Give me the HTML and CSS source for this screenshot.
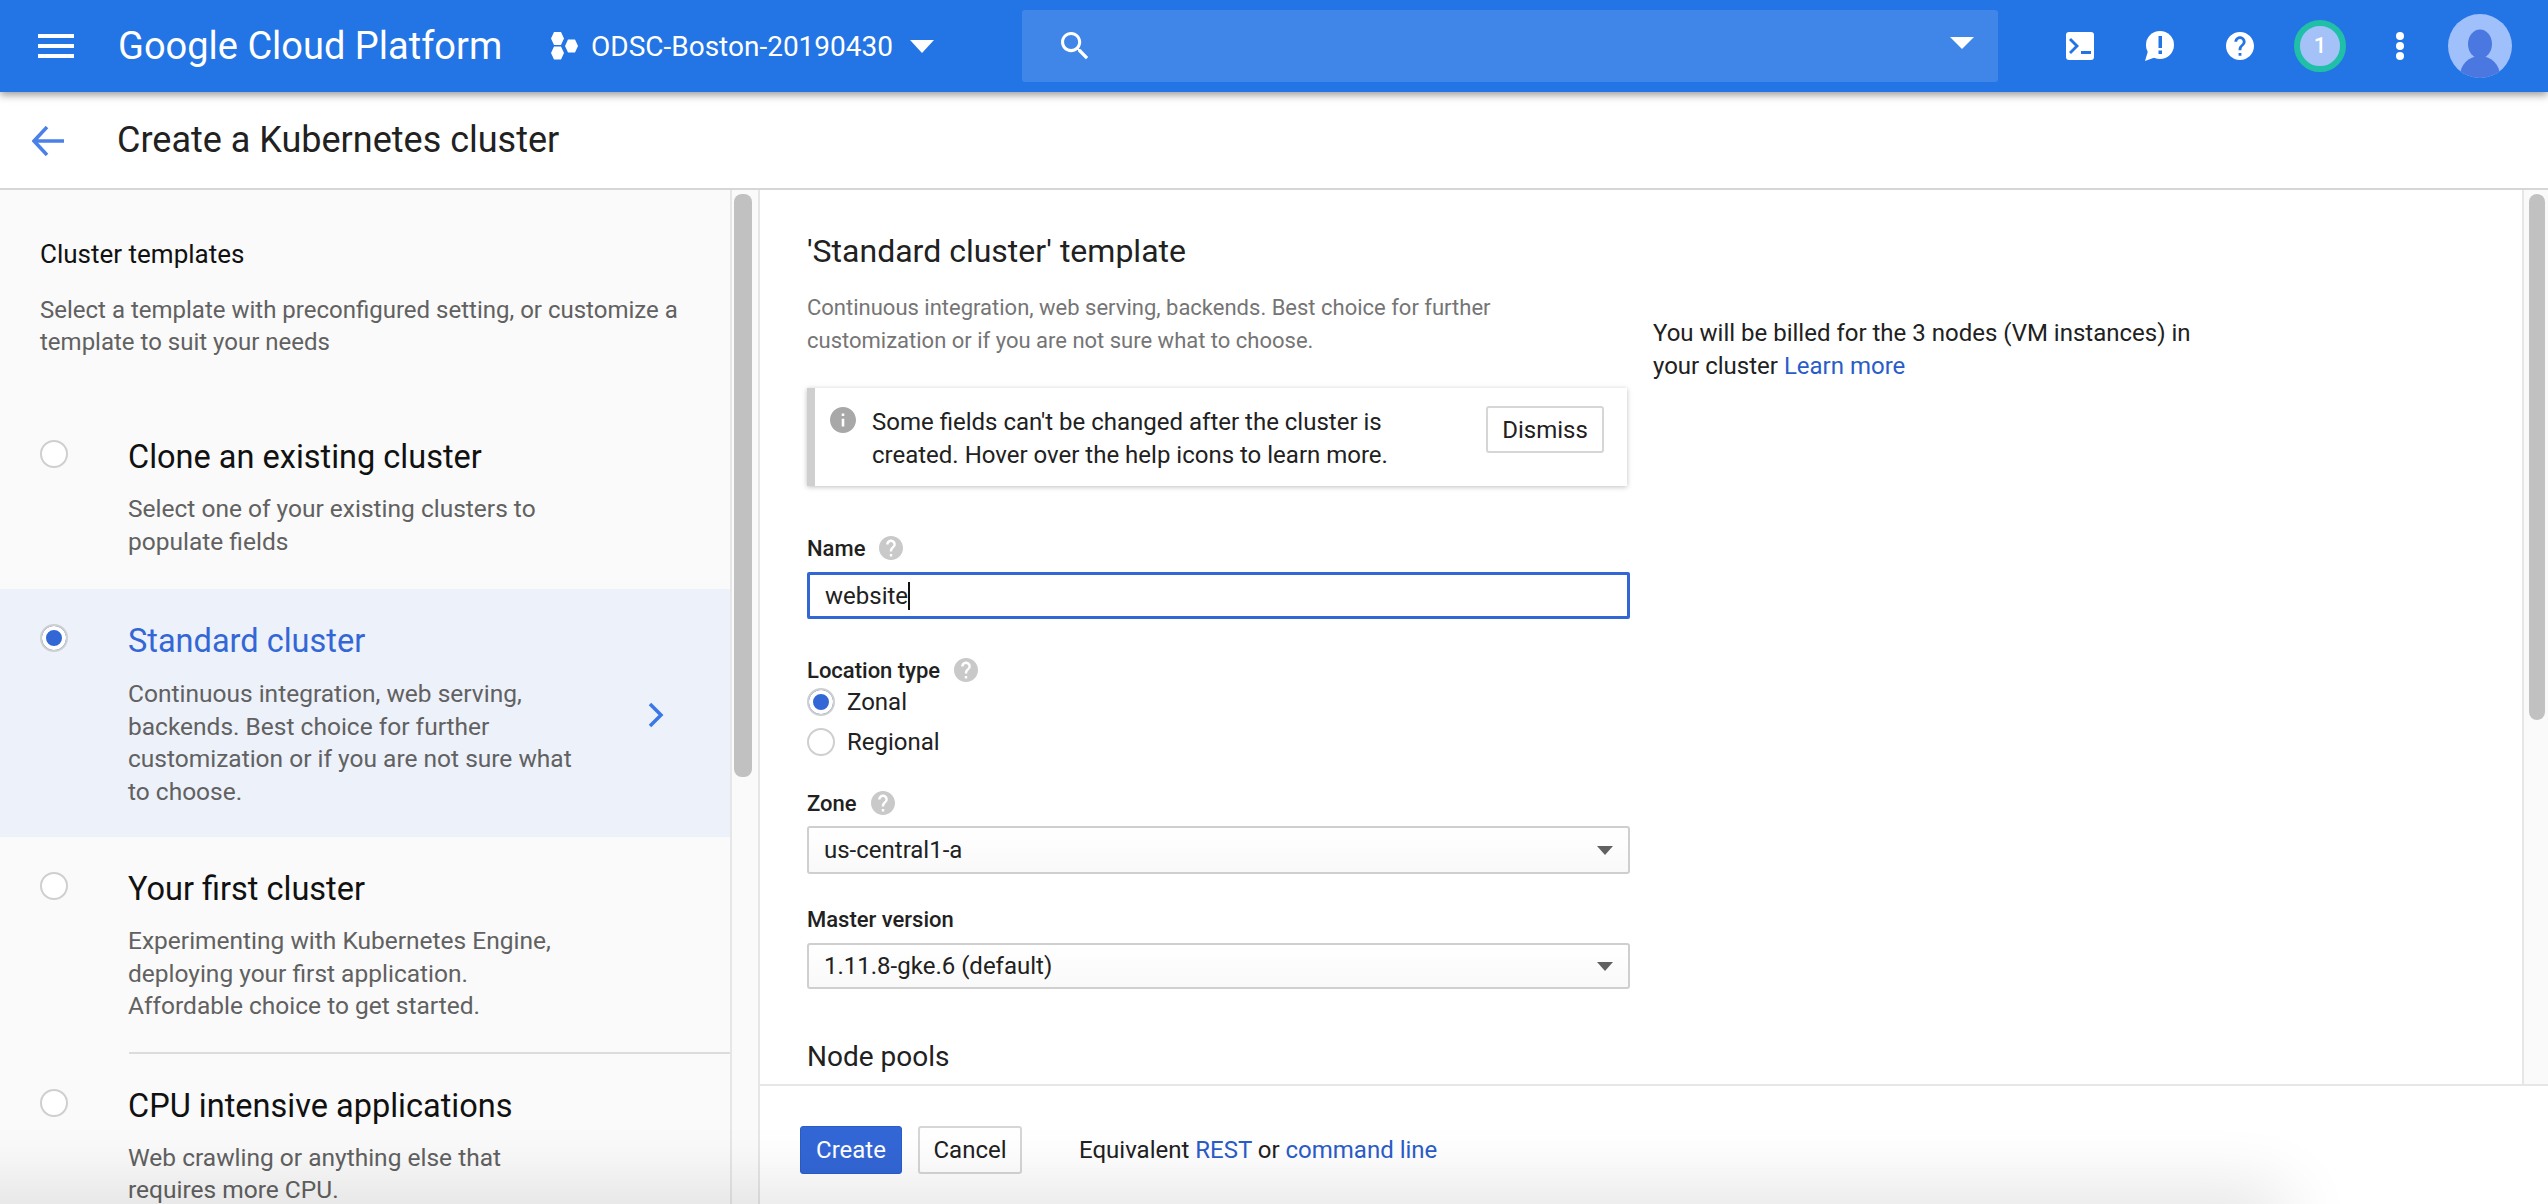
FILE: index.html
```html
<!DOCTYPE html>
<html lang="en">
<head>
    <meta charset="UTF-8">
    <meta name="viewport" content="width=device-width, initial-scale=1.0">
    <title>Create a Kubernetes cluster</title>
    <link rel="stylesheet" href="styles.css">
</head>
<body>
    <svg class="defs" width="0" height="0">
        <symbol id="help" viewBox="2 2 20 20"><path d="M12 2C6.48 2 2 6.48 2 12s4.48 10 10 10 10-4.48 10-10S17.52 2 12 2zm1 17h-2v-2h2v2zm2.07-7.75l-.9.92C13.45 12.9 13 13.5 13 15h-2v-.5c0-1.1.45-2.1 1.17-2.83l1.24-1.26c.37-.36.59-.86.59-1.41 0-1.1-.9-2-2-2s-2 .9-2 2H8c0-2.21 1.79-4 4-4s4 1.79 4 4c0 .88-.36 1.68-.93 2.25z"/></symbol>
    </svg>

    <header class="topbar">
        <svg class="menu-icon" viewBox="0 0 36 24"><path d="M0 0h36v4H0zM0 10h36v4H0zM0 20h36v4H0z"/></svg>
        <div class="logo">Google Cloud Platform</div>
        <svg class="project-icon" viewBox="0 0 27 28"><path d="M3 0h7l3 6.500-3 6.500H3L0 6.500zM3 14.500h7l3 6.500-3 6.500H3L0 21zM17 7.500h7l3 6.500-3 6.500h-7l-3-6.500z"/></svg>
        <div class="project-name">ODSC-Boston-20190430</div>
        <span class="tri tri-project"></span>
        <div class="search">
            <svg class="search-icon" viewBox="3 3 18 18"><path d="M15.5 14h-.79l-.28-.27C15.41 12.59 16 11.11 16 9.5 16 5.91 13.09 3 9.5 3S3 5.91 3 9.5 5.91 16 9.5 16c1.61 0 3.09-.59 4.23-1.57l.27.28v.79l5 4.99L20.49 19l-4.99-5zm-6 0C7.01 14 5 11.99 5 9.5S7.01 5 9.5 5 14 7.01 14 9.5 11.99 14 9.5 14z"/></svg>
            <span class="tri tri-search"></span>
        </div>
        <svg class="top-icon terminal" viewBox="0 0 28 28"><rect width="28" height="28" rx="3" fill="#fff"/><path d="M3 8l2-2 8 8-8 8-2-2 6-6z" fill="#2374e4"/><path d="M15 19h10v3H15z" fill="#2374e4"/></svg>
        <svg class="top-icon feedback" viewBox="0 0 32 30"><circle cx="16" cy="14" r="14" fill="#fff"/><path d="M4 20l-3 10 11-4z" fill="#fff"/><path d="M14.500 5h3.500v12h-3.500zM14.500 19.500h3.500v3.500h-3.500z" fill="#2374e4"/></svg>
        <svg class="top-icon help-top"><use href="#help"/></svg>
        <div class="badge">1</div>
        <svg class="top-icon dots" viewBox="0 0 8 28"><circle cx="4" cy="4" r="4"/><circle cx="4" cy="14" r="4"/><circle cx="4" cy="24" r="4"/></svg>
        <svg class="avatar" viewBox="0 0 64 64"><circle cx="32" cy="32" r="32" fill="#9fc0fa"/><clipPath id="avatar-clip"><circle cx="32" cy="32" r="32"/></clipPath><g clip-path="url(#avatar-clip)" fill="#4a78e0"><ellipse cx="32" cy="30" rx="12" ry="14.500"/><ellipse cx="32" cy="62" rx="20" ry="20"/></g></svg>
    </header>

    <div class="subheader">
        <svg class="back-icon" viewBox="0 0 32 30"><path d="M15 1L2 15l13 14M2 15h30" fill="none" stroke="#4a80e8" stroke-width="3.500"/></svg>
        <h1 class="page-title">Create a Kubernetes cluster</h1>
    </div>

    <div class="layout">
        <aside class="sidebar">
            <div class="sidebar-list">
                <div class="sidebar-head">
                    <h2 class="sidebar-title">Cluster templates</h2>
                    <p class="sidebar-desc">Select a template with preconfigured setting, or customize a<br>template to suit your needs</p>
                </div>

                <div class="option">
                    <span class="radio"></span>
                    <div class="option-text">
                        <div class="option-title">Clone an existing cluster</div>
                        <div class="option-desc">Select one of your existing clusters to<br>populate fields</div>
                    </div>
                </div>

                <div class="option selected">
                    <span class="radio checked"></span>
                    <div class="option-text">
                        <div class="option-title">Standard cluster</div>
                        <div class="option-desc">Continuous integration, web serving,<br>backends. Best choice for further<br>customization or if you are not sure what<br>to choose.</div>
                    </div>
                    <svg class="option-arrow" viewBox="0 0 16 26"><path d="M2 2l11 11L2 24" fill="none" stroke="#3b78e7" stroke-width="3.500"/></svg>
                </div>

                <div class="option">
                    <span class="radio"></span>
                    <div class="option-text">
                        <div class="option-title">Your first cluster</div>
                        <div class="option-desc">Experimenting with Kubernetes Engine,<br>deploying your first application.<br>Affordable choice to get started.</div>
                    </div>
                </div>

                <div class="option-divider"></div>

                <div class="option">
                    <span class="radio"></span>
                    <div class="option-text">
                        <div class="option-title">CPU intensive applications</div>
                        <div class="option-desc">Web crawling or anything else that<br>requires more CPU.</div>
                    </div>
                </div>
            </div>
            <div class="scrollbar scrollbar-side"><div class="thumb thumb-side"></div></div>
        </aside>

        <main class="main">
            <div class="main-body">
                <div class="form">
                    <h2 class="form-title">'Standard cluster' template</h2>
                    <p class="form-desc">Continuous integration, web serving, backends. Best choice for further<br>customization or if you are not sure what to choose.</p>

                    <div class="callout">
                        <svg class="callout-icon" viewBox="2 2 20 20"><path d="M12 2C6.48 2 2 6.48 2 12s4.48 10 10 10 10-4.48 10-10S17.52 2 12 2zm1 15h-2v-6h2v6zm0-8h-2V7h2v2z"/></svg>
                        <p class="callout-text">Some fields can't be changed after the cluster is<br>created. Hover over the help icons to learn more.</p>
                        <button class="btn btn-dismiss">Dismiss</button>
                    </div>

                    <div class="field-label label-name">Name <svg class="help-icon"><use href="#help"/></svg></div>
                    <div class="text-input"><span>website</span><span class="caret"></span></div>

                    <div class="field-label label-location">Location type <svg class="help-icon"><use href="#help"/></svg></div>
                    <div class="radio-group">
                        <div class="radio-row"><span class="radio checked"></span>Zonal</div>
                        <div class="radio-row"><span class="radio"></span>Regional</div>
                    </div>

                    <div class="field-label label-zone">Zone <svg class="help-icon"><use href="#help"/></svg></div>
                    <div class="select select-zone">us-central1-a<span class="tri tri-select"></span></div>

                    <div class="field-label label-master">Master version</div>
                    <div class="select select-master">1.11.8-gke.6 (default)<span class="tri tri-select"></span></div>

                    <h2 class="form-title node-pools">Node pools</h2>
                </div>

                <p class="billing-note">You will be billed for the 3 nodes (VM instances) in<br>your cluster <a href="#">Learn more</a></p>

                <div class="scrollbar scrollbar-main"><div class="thumb thumb-main"></div></div>
            </div>

            <footer class="footer">
                <button class="btn btn-primary">Create</button>
                <button class="btn btn-cancel">Cancel</button>
                <div class="footer-text">Equivalent <a href="#">REST</a> or <a href="#">command line</a></div>
            </footer>
        </main>
    </div>

    <div class="bottom-shade"></div>
</body>
</html>
```

FILE: styles.css
```css
* {
    box-sizing: border-box;
}
html, body {
    height: 100%;
}
body {
    margin: 0;
    display: flex;
    flex-direction: column;
    position: relative;
    overflow: hidden;
    font-family: Roboto, "Liberation Sans", sans-serif;
    font-size: 24px;
    color: #212121;
    background: #fff;
}
h1, h2, p {
    margin: 0;
    font-weight: 400;
}
a {
    color: #2a5cc9;
    text-decoration: none;
}
.defs {
    position: absolute;
}

/* top bar */
.topbar {
    flex: none;
    height: 92px;
    display: flex;
    align-items: center;
    background: #2374e4;
    color: #fff;
    box-shadow: 0 3px 8px rgba(0,0,0,0.4);
    position: relative;
    z-index: 2;
}
.menu-icon {
    width: 36px;
    height: 24px;
    margin-left: 38px;
    fill: #fff;
}
.logo {
    margin-left: 44px;
    font-size: 38px;
    white-space: nowrap;
    width: 433px;
}
.project-icon {
    width: 27px;
    height: 28px;
    fill: #fff;
}
.project-name {
    margin-left: 13px;
    font-size: 28px;
    width: 319px;
    white-space: nowrap;
}
.tri {
    display: block;
    width: 0;
    height: 0;
    border-style: solid;
    border-color: transparent;
    border-bottom-width: 0;
}
.tri-project {
    border-width: 13px 12px 0;
    border-top-color: #fff;
}
.search {
    width: 976px;
    height: 72px;
    margin-left: 88px;
    display: flex;
    align-items: center;
    justify-content: space-between;
    padding: 0 24px 0 39px;
    background: #3f86e8;
    border-radius: 3px;
}
.search-icon {
    width: 28px;
    height: 28px;
    fill: #fff;
}
.tri-search {
    border-width: 12px 12px 0;
    border-top-color: #fff;
    margin-bottom: 6px;
}
.top-icon {
    fill: #fff;
    flex: none;
}
.terminal {
    width: 28px;
    height: 28px;
    margin-left: 68px;
}
.feedback {
    width: 32px;
    height: 30px;
    margin-left: 50px;
}
.help-top {
    width: 28px;
    height: 28px;
    margin-left: 50px;
}
.badge {
    width: 52px;
    height: 52px;
    margin-left: 40px;
    border: 6px solid #1fbfa8;
    border-radius: 50%;
    background: #a4c2f8;
    font-size: 22px;
    font-weight: 500;
    line-height: 40px;
    text-align: center;
}
.dots {
    width: 8px;
    height: 28px;
    margin-left: 50px;
}
.avatar {
    width: 64px;
    height: 64px;
    margin-left: 44px;
}

/* page title row */
.subheader {
    flex: none;
    height: 98px;
    display: flex;
    align-items: center;
    padding-left: 32px;
    border-bottom: 2px solid #d6d6d6;
}
.back-icon {
    width: 32px;
    height: 30px;
    margin-top: 2px;
}
.page-title {
    margin-left: 53px;
    font-size: 36px;
}

.layout {
    flex: 1;
    display: flex;
    min-height: 0;
}

/* left column */
.sidebar {
    flex: none;
    width: 760px;
    display: flex;
    background: #fafafa;
    border-right: 2px solid #e6e6e6;
}
.sidebar-list {
    width: 732px;
    flex: none;
    overflow: hidden;
    border-right: 2px solid #e6e6e6;
}
.sidebar-head {
    padding: 48px 0 49px 40px;
}
.sidebar-title {
    font-size: 26px;
    line-height: 32px;
    color: #111;
}
.sidebar-desc {
    margin-top: 24px;
    line-height: 32px;
    color: #616161;
}
.option {
    display: flex;
    padding: 30px 0 31px 40px;
}
.option.selected {
    padding: 32px 0 29px 40px;
    background: #edf1fa;
}
.option.selected + .option {
    padding-top: 32px;
}
.option-text {
    margin-left: 60px;
}
.option-title {
    font-size: 32.500px;
    line-height: 40px;
    color: #111;
}
.selected .option-title {
    color: #3367d6;
}
.option-desc {
    margin-top: 16px;
    font-size: 24.500px;
    line-height: 32.5px;
    color: #616161;
}
.selected .option-desc {
    margin-top: 17px;
}
.option-arrow {
    width: 16px;
    height: 26px;
    align-self: center;
    margin-left: auto;
    margin-right: 66px;
}
.option-divider {
    height: 2px;
    margin: -2px 0 2px 129px;
    background: #dcdcdc;
}
.radio {
    flex: none;
    width: 28px;
    height: 28px;
    margin-top: 3px;
    border: 2px solid #cfcfcf;
    border-radius: 50%;
    background: #fff;
}
.radio.checked {
    background: #3367d6;
    box-shadow: inset 0 0 0 4px #fff;
}

/* scrollbars */
.scrollbar {
    flex: none;
    background: #fafafa;
}
.scrollbar-side {
    width: 26px;
    padding: 4px 6px 0 2px;
}
.thumb {
    border-radius: 8px;
    background: #c1c1c1;
}
.thumb-side {
    height: 583px;
}
.scrollbar-main {
    width: 26px;
    margin-left: auto;
    padding: 4px 3px 0 5px;
    border-left: 2px solid #e6e6e6;
}
.thumb-main {
    height: 526px;
}

/* form */
.main {
    flex: 1;
    min-width: 0;
    display: flex;
    flex-direction: column;
}
.main-body {
    flex: 1;
    min-height: 0;
    display: flex;
    overflow: hidden;
    padding-left: 47px;
}
.form {
    flex: none;
    width: 823px;
    padding-top: 41px;
}
.form-title {
    font-size: 32px;
    line-height: 40px;
    color: #212121;
}
.form-desc {
    margin-top: 21px;
    line-height: 32.5px;
    font-size: 22px;
    color: #757575;
}
.callout {
    width: 820px;
    height: 98px;
    margin-top: 31px;
    display: flex;
    align-items: flex-start;
    padding: 18px 23px 0 15px;
    background: #fff;
    border-left: 8px solid #cfcfcf;
    box-shadow: 0 1px 5px rgba(0,0,0,0.25);
}
.callout-icon {
    flex: none;
    width: 26px;
    height: 26px;
    margin-top: 1px;
    fill: #a8a8a8;
}
.callout-text {
    margin-left: 16px;
    line-height: 32.5px;
    color: #212121;
}
.btn {
    font-family: inherit;
    font-size: 24px;
    border-radius: 3px;
}
.btn-dismiss {
    margin-left: auto;
    width: 118px;
    height: 47px;
    padding: 0;
    background: #fff;
    color: #212121;
    border: 2px solid #d6d6d6;
}
.field-label {
    display: flex;
    align-items: center;
    gap: 14px;
    height: 28px;
    font-size: 22px;
    font-weight: 500;
    color: #212121;
}
.help-icon {
    width: 24px;
    height: 24px;
    fill: #c9c9c9;
}
.label-name {
    margin-top: 48px;
}
.text-input {
    display: flex;
    align-items: center;
    height: 47px;
    margin-top: 10px;
    padding-left: 15px;
    border: 3px solid #3367d6;
    border-radius: 2px;
}
.caret {
    width: 1.500px;
    height: 28px;
    background: #111;
}
.label-location {
    margin-top: 37px;
}
.radio-group {
    margin-top: -2px;
}
.radio-row {
    display: flex;
    align-items: center;
    gap: 12px;
    height: 40px;
}
.radio-row .radio {
    margin-top: 0;
}
.label-zone {
    margin-top: 27px;
}
.select {
    display: flex;
    align-items: center;
    justify-content: space-between;
    padding: 0 15px 0 15px;
    border: 2px solid #cfcfcf;
    border-radius: 3px;
    background: linear-gradient(#fff, #f9f9f9);
}
.select-zone {
    height: 48px;
    margin-top: 9px;
}
.label-master {
    margin-top: 31px;
}
.select-master {
    height: 46px;
    margin-top: 10px;
}
.tri-select {
    border-width: 9px 8px 0;
    border-top-color: #616161;
}
.form-title.node-pools {
    margin-top: 48px;
    font-size: 28px;
}
.billing-note {
    margin: 127px 0 0 23px;
    line-height: 32.5px;
    white-space: nowrap;
    color: #212121;
}

/* footer */
.footer {
    flex: none;
    height: 120px;
    display: flex;
    align-items: flex-start;
    padding: 40px 0 0 40px;
    border-top: 2px solid #e6e6e6;
}
.btn-primary {
    width: 102px;
    height: 48px;
    padding: 0;
    background: #3367d6;
    color: #fff;
    border: 1px solid #2a5cc9;
}
.btn-cancel {
    width: 104px;
    height: 48px;
    margin-left: 16px;
    padding: 0;
    background: #fff;
    color: #212121;
    border: 2px solid #d6d6d6;
}
.footer-text {
    margin-left: 57px;
    line-height: 48px;
}

/* soft shadow coming up from the bottom edge */
.bottom-shade {
    position: absolute;
    left: -100px;
    bottom: -30px;
    width: 2380px;
    height: 30px;
    border-radius: 30px;
    box-shadow: 0 0 70px 10px rgba(0,0,0,0.14);
    pointer-events: none;
}
```
